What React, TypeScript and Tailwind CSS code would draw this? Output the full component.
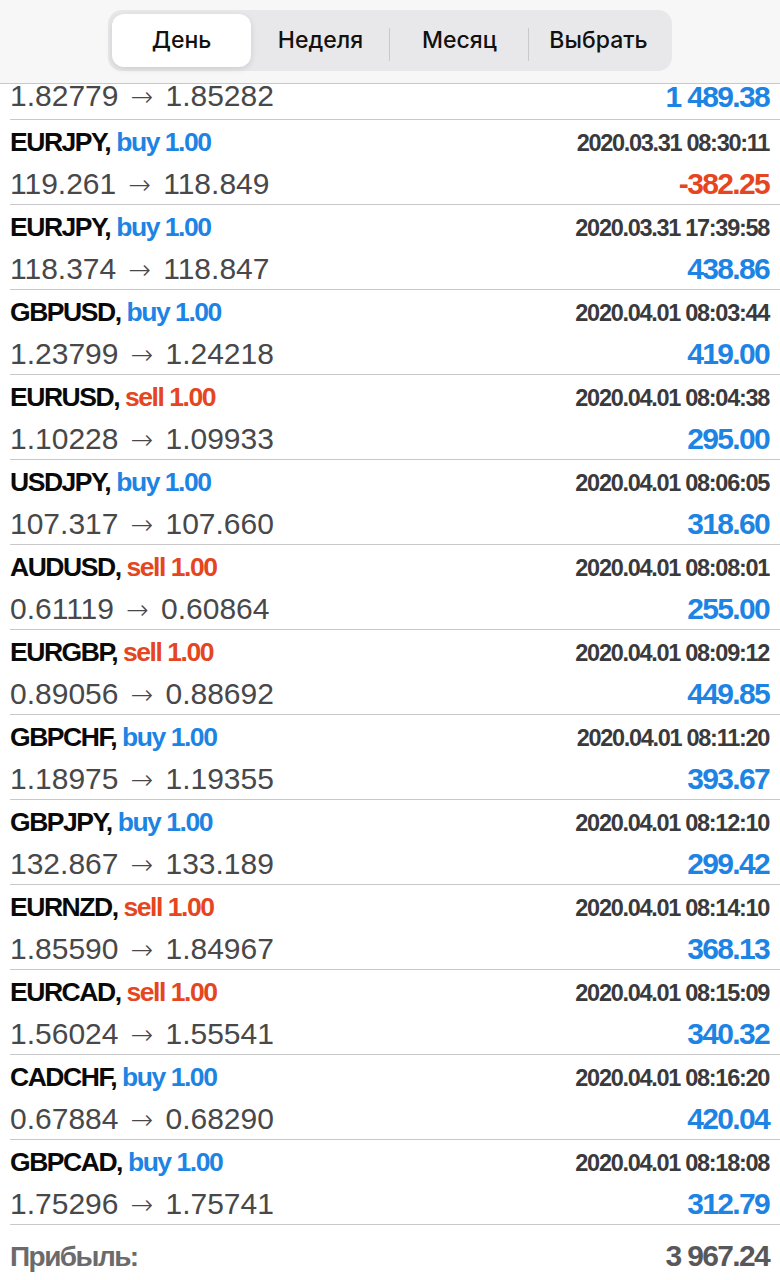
import React from "react";

type Deal = {
  symbol: string;
  side: "buy" | "sell";
  time: string;
  open: string;
  close: string;
  profit: string;
};

const deals: Deal[] = [
  { symbol: "EURJPY", side: "buy", time: "2020.03.31 08:30:11", open: "119.261", close: "118.849", profit: "-382.25" },
  { symbol: "EURJPY", side: "buy", time: "2020.03.31 17:39:58", open: "118.374", close: "118.847", profit: "438.86" },
  { symbol: "GBPUSD", side: "buy", time: "2020.04.01 08:03:44", open: "1.23799", close: "1.24218", profit: "419.00" },
  { symbol: "EURUSD", side: "sell", time: "2020.04.01 08:04:38", open: "1.10228", close: "1.09933", profit: "295.00" },
  { symbol: "USDJPY", side: "buy", time: "2020.04.01 08:06:05", open: "107.317", close: "107.660", profit: "318.60" },
  { symbol: "AUDUSD", side: "sell", time: "2020.04.01 08:08:01", open: "0.61119", close: "0.60864", profit: "255.00" },
  { symbol: "EURGBP", side: "sell", time: "2020.04.01 08:09:12", open: "0.89056", close: "0.88692", profit: "449.85" },
  { symbol: "GBPCHF", side: "buy", time: "2020.04.01 08:11:20", open: "1.18975", close: "1.19355", profit: "393.67" },
  { symbol: "GBPJPY", side: "buy", time: "2020.04.01 08:12:10", open: "132.867", close: "133.189", profit: "299.42" },
  { symbol: "EURNZD", side: "sell", time: "2020.04.01 08:14:10", open: "1.85590", close: "1.84967", profit: "368.13" },
  { symbol: "EURCAD", side: "sell", time: "2020.04.01 08:15:09", open: "1.56024", close: "1.55541", profit: "340.32" },
  { symbol: "CADCHF", side: "buy", time: "2020.04.01 08:16:20", open: "0.67884", close: "0.68290", profit: "420.04" },
  { symbol: "GBPCAD", side: "buy", time: "2020.04.01 08:18:08", open: "1.75296", close: "1.75741", profit: "312.79" },
];

const tabs = ["День", "Неделя", "Месяц", "Выбрать"];

// condensed look: bold Liberation Sans pulled together
const bold = "font-['Liberation_Sans',Arial,sans-serif] font-bold tracking-[-0.055em]";
const regular = "font-['Liberation_Sans',Arial,sans-serif]";

const Prices = ({ open, close }: { open: string; close: string }) => (
  <span className={`${regular} text-[30px] text-[#48484a]`}>
    {open}
    <span className="inline-block w-[47px] text-center font-['DejaVu_Sans',sans-serif] font-light text-[27px]">→</span>
    {close}
  </span>
);

const App = () => {
  return (
    <div className="w-[780px] h-[1280px] overflow-hidden bg-white">
      {/* top segmented control */}
      <div className="h-[84px] bg-[#f7f7f7] border-b border-[#c8c8ca] flex justify-center pt-[10px]">
        <div className="w-[564px] h-[61px] rounded-[14px] bg-[#e8e8ea] p-[4px] grid grid-cols-4 font-['Inter','Noto_Sans',sans-serif] font-medium text-[23px] text-[#111]">
          {tabs.map((t, i) => (
            <div key={t} className="relative flex items-center justify-center">
              {i === 0 ? (
                <div className="w-full h-[53px] rounded-[12px] bg-white shadow-[0_2px_6px_rgba(0,0,0,0.12)] flex items-center justify-center">
                  {t}
                </div>
              ) : (
                <span>{t}</span>
              )}
              {i >= 2 && (
                <div className="absolute left-[-1px] top-[14px] h-[33px] w-px bg-[#c9c9cc]" />
              )}
            </div>
          ))}
        </div>
      </div>

      {/* partial row under header */}
      <div className="ml-[10px] pr-[11px] h-[36px] border-b border-[#c8c8ca] flex items-end justify-between pb-[7px] leading-[30px]">
        <Prices open="1.82779" close="1.85282" />
        <span className={`${bold} text-[30px] text-[#1d84e4]`}>1 489.38</span>
      </div>

      {deals.map((d, i) => (
        <div key={i} className="ml-[10px] pr-[11px] h-[85px] border-b border-[#c8c8ca] pt-[8px] flex flex-col">
          <div className="flex items-baseline justify-between h-[28px] leading-[28px]">
            <span className={`${bold} text-[26.5px] text-[#0a0a0a]`}>
              {d.symbol},{" "}
              <span className={d.side === "buy" ? "text-[#1d84e4]" : "text-[#e5461f]"}>
                {d.side} 1.00
              </span>
            </span>
            <span className={`${bold} text-[23.5px] text-[#3a3a3c]`}>{d.time}</span>
          </div>
          <div className="flex items-baseline justify-between mt-[13px] h-[30px] leading-[30px]">
            <Prices open={d.open} close={d.close} />
            <span
              className={`${bold} text-[30px] ${d.profit.startsWith("-") ? "text-[#e5461f]" : "text-[#1d84e4]"}`}
            >
              {d.profit}
            </span>
          </div>
        </div>
      ))}

      {/* total */}
      <div className="ml-[10px] pr-[11px] pt-[16px] flex items-baseline justify-between">
        <span className={`${bold} text-[28px] leading-[30px] text-[#6b6b6d]`}>Прибыль:</span>
        <span className={`${bold} text-[30px] leading-[30px] text-[#58585a]`}>3 967.24</span>
      </div>
    </div>
  );
};

export default App;
